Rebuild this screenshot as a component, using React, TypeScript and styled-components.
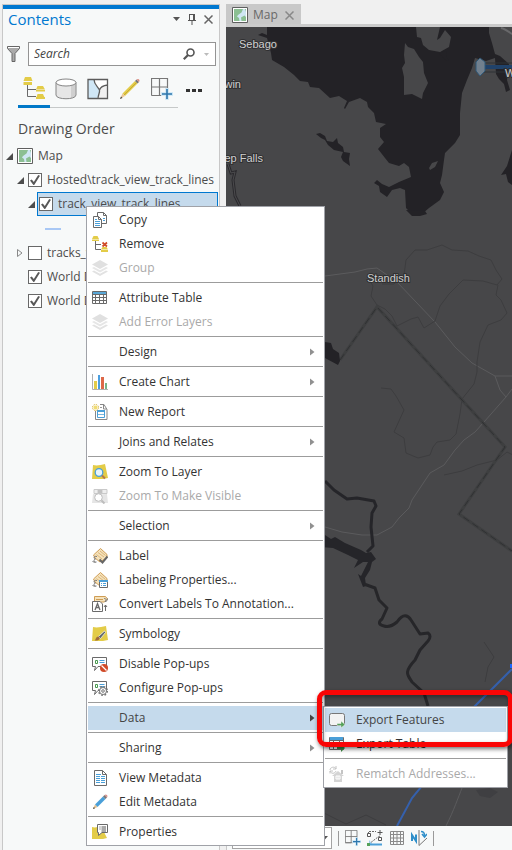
import React from "react";
import styled, { createGlobalStyle, css } from "styled-components";

const GlobalStyle = createGlobalStyle`
  * { box-sizing: border-box; }
  body { margin: 0; background: #f0f0f0; }
  button, input, select { font: inherit; color: inherit; }
  button { border: 0; padding: 0; background: none; }
`;

const Page = styled.div`
  position: relative;
  display: flex;
  gap: 6px;
  min-height: 100vh;
  padding: 4px 0 0 2px;
  overflow: hidden;
  background: #f0f0f0;
  color: #4c4c4c;
  font: 12px/24px "Open Sans", "Noto Sans", sans-serif;
`;

/* Contents pane */
const Pane = styled.aside`
  flex: 0 0 218px;
  background: #f7f9f9;
  border: 1px solid #c8c8c8;
  border-bottom: 0;
`;

const PaneAccent = styled.div`
  height: 4px;
  background: #0078d0;
`;

const PaneHeader = styled.header`
  display: flex;
  align-items: center;
  height: 20px;
  padding: 0 5px 0 5px;
  gap: 4px;
`;

const PaneTitle = styled.h1`
  flex: 1;
  margin: 0;
  color: #0078d0;
  font-size: 15px;
  font-weight: 400;
`;

const SmallButton = styled.button`
  display: grid;
  place-items: center;
  width: 12px;
  height: 16px;
`;

const SearchRow = styled.div`
  display: flex;
  align-items: center;
  gap: 8px;
  margin-top: 13px;
  padding: 0 3px 0 4px;
`;

const SearchField = styled.div`
  flex: 1;
  display: flex;
  align-items: center;
  height: 24px;
  padding: 0 3px 0 5px;
  gap: 5px;
  background: #fff;
  border: 1px solid #949494;
`;

const SearchInput = styled.input`
  flex: 1;
  width: 0;
  padding: 0;
  border: 0;
  outline: 0;
  background: none;
  font-style: italic;
  &::placeholder { color: #444; opacity: 1; }
`;

const ViewTabs = styled.div`
  display: flex;
  margin: 3px 0 0 15px;
`;

const ViewTab = styled.button<{ $active?: boolean; $plain?: boolean }>`
  display: grid;
  place-items: center;
  flex: 0 0 32px;
  height: 39px;
  padding-top: ${(p) => (p.$plain ? 6 : 2)}px;
  border-bottom: ${(p) =>
    p.$active ? "3px solid #0078c8" : p.$plain ? "3px solid transparent" : "1px solid #c6c9c9"};
`;

const SectionTitle = styled.h2`
  margin: 9px 0 3px 15px;
  font-size: 14px;
  font-weight: 500;
  line-height: 24px;
`;

const Tree = styled.ul`
  margin: 0;
  padding: 0;
  list-style: none;
`;

const TreeRow = styled.li<{ $depth: number }>`
  display: flex;
  align-items: center;
  gap: 2px;
  height: 24px;
  margin-left: ${(p) => 2 + p.$depth * 11}px;
  white-space: nowrap;
`;

const TreeBody = styled.label<{ $selected?: boolean }>`
  flex: 1;
  display: flex;
  align-items: center;
  gap: 5px;
  height: 24px;
  min-width: 0;
  margin-right: 1px;
  padding-left: 1px;
  border: 1px solid ${(p) => (p.$selected ? "#0078d0" : "transparent")};
  background: ${(p) => (p.$selected ? "#c5daec" : "none")};
`;

const Expander = styled.button`
  display: grid;
  place-items: center;
  width: 8px;
  height: 16px;
`;

const Check = styled.input`
  appearance: none;
  display: grid;
  place-items: center;
  flex: none;
  width: 14px;
  height: 14px;
  margin: 0;
  border: 1px solid #686868;
  background: #fff;
  &:checked::before {
    content: "";
    width: 10px;
    height: 10px;
    background: #585858;
    clip-path: polygon(0 55%, 18% 45%, 38% 70%, 82% 0, 100% 8%, 42% 100%, 34% 100%);
  }
`;

const SymbolRow = styled.li`
  height: 25px;
  padding: 12px 0 0 42px;
`;

const LineSymbol = styled.div`
  width: 16px;
  height: 2px;
  background: #a9c8f5;
`;

/* Map view */
const MapView = styled.main`
  flex: 1;
  display: flex;
  flex-direction: column;
  min-width: 0;
`;

const TabStrip = styled.div`
  display: flex;
  height: 23px;
  border-bottom: 3px solid #cbcbcb;
`;

const MapTab = styled.div`
  display: flex;
  align-items: center;
  gap: 6px;
  height: 20px;
  padding: 2px 5px 0 6px;
  background: #c8c8c8;
  color: #686868;
`;

const MapTabName = styled.button`
  display: flex;
  align-items: center;
  gap: 5px;
`;

const MapCanvas = styled.div`
  flex: 1;
  position: relative;
  overflow: hidden;
  background: #474749;
`;

const MapDrawing = styled.svg`
  position: absolute;
  inset: 0;
  width: 100%;
  height: 100%;
`;

const StatusBar = styled.footer`
  display: flex;
  align-items: center;
  gap: 6px;
  height: 24px;
  padding-left: 5px;
  background: #f7f9f9;
  border-left: 1px solid #c8c8c8;
`;

const ScaleBox = styled.div`
  display: grid;
  grid-template-columns: 1fr 10px;
  align-items: center;
  width: 100px;
  height: 22px;
  border: 1px solid #a4a4a4;
  background: #fff;
`;

const ScaleSelect = styled.select`
  appearance: none;
  width: 100%;
  height: 20px;
  padding: 0 4px;
  border: 0;
  background: none;
`;

const Divider = styled.span`
  width: 1px;
  height: 15px;
  background: #9a9a9a;
`;

const ToolButton = styled.button`
  display: grid;
  place-items: center;
  width: 16px;
  height: 20px;
`;

/* Menus */
const menuBox = css`
  position: absolute;
  padding: 1px;
  margin: 0;
  list-style: none;
  background: #fff;
  border: 1px solid #a0a2a8;
  color: #333;
`;

const ContextMenu = styled.ul`
  ${menuBox}
  left: 86px;
  top: 206px;
  width: 239px;
`;

const SubMenu = styled.ul`
  ${menuBox}
  left: 100%;
  top: 0;
  width: 185px;
`;

const MenuSlot = styled.li`
  position: relative;
`;

const MenuButton = styled.button<{ $active?: boolean }>`
  display: grid;
  grid-template-columns: 16px 1fr 8px;
  column-gap: 11px;
  align-items: center;
  width: 100%;
  height: 24px;
  padding: 0 5px 0 4px;
  background: ${(p) => (p.$active ? "#c5daec" : "transparent")};
  color: ${(p) => (p.$active ? "#444" : "#333")};
  text-align: left;
  white-space: nowrap;
  &:disabled { color: #a9a9a9; }
`;

const IconCell = styled.span`
  display: grid;
  width: 16px;
  height: 16px;
`;

const Separator = styled.li`
  height: 1px;
  margin: 2px 0 3px;
  background: #9c9c9c;
`;

const Highlight = styled.div`
  position: absolute;
  top: -17px;
  left: -7px;
  width: 196px;
  height: 57px;
  border: 5px solid #fa0505;
  border-radius: 9px;
  box-shadow: 1px 2px 4px rgba(0, 0, 0, 0.55), inset 1px 2px 4px rgba(0, 0, 0, 0.4);
  pointer-events: none;
`;

/* Icons */
const G = "#6a6a6a";
const Y = "#e3cc48";
const B = "#4a9fd8";

const Svg = ({ s = 16, w, h, children }: { s?: number; w?: number; h?: number; children: React.ReactNode }) => (
  <svg width={w ?? s} height={h ?? s} viewBox={`0 0 ${w ?? s} ${h ?? s}`} fill="none" aria-hidden="true">
    {children}
  </svg>
);

const LayersFaded = () => (
  <Svg>
    <path d="M0 11.500 8 16l8-4.500-2-1-6 3.300-6-3.300z" fill="#e2e2e2" />
    <path d="M0 8 8 12.500 16 8l-2-1-6 3.300L2 7z" fill="#e6e6e6" />
    <path d="M8 0 16 4.500 8 9 0 4.500z" fill="#e0e0e0" />
  </Svg>
);

const Gear = ({ x, y }: { x: number; y: number }) => (
  <g transform={`translate(${x} ${y})`} stroke="#777">
    <circle r="3.500" strokeWidth="1" fill="#fff" />
    <circle r="4.300" strokeWidth="1.500" strokeDasharray="1.700 1.680" />
    <circle r="1.300" />
  </g>
);

const PopUp = () => (
  <>
    <path d="M.5 1.500h14v9H6L2.500 14.500l1-4h-3z" stroke={G} fill="#fff" />
    <path d="M3.500 4.500h2v3h-2z" stroke="#4a9a50" />
    <path d="M7.500 4.500h5M7.500 6.500h5" stroke={B} />
  </>
);

const Tag = () => (
  <>
    <path d="M1.500 7 8.500.5 15 6.500v3L8 14 3 10z" fill="#f5e2bb" stroke="#cf9d55" />
    <path d="M6 4.500 12 9M4.500 6.500 10 11M8 3l5.500 4.500" stroke="#dcb67a" />
    <path d="M5 8.500c-3-1-4 2-1.500 2.500C1 11.500 2 14.500 4.500 14M.5 13.500l3 1" stroke="#777" />
  </>
);

const icons: Record<string, React.ReactNode> = {
  copy: (
    <Svg>
      <path d="M5.500.5h6l3 3v8h-9z" fill="#fff" stroke={G} />
      <path d="M11.500.5v3h3" stroke={G} />
      <path d="M11 6.500h2M11 8.500h2" stroke={B} />
      <path d="M1.500 4.500h5l3 3v8h-8z" fill="#fff" stroke={G} />
      <path d="M6.500 4.500v3h3" stroke={G} />
      <path d="M3 7.500h2M3 9.500h5M3 11.500h5M3 13.500h5" stroke={B} />
    </Svg>
  ),
  remove: (
    <Svg>
      <path d="M1.500 0h4L7 3H0zM0 3.500h7V5H0zM10.500 11h4l1.500 2.500H9zM9 14h7v2H9z" fill={Y} />
      <path d="M3.500 5v8.500H9M3.500 8.500H9" stroke={G} />
      <path d="m10.500 6.500 4.500 4m0-4-4.500 4" stroke="#d04a28" strokeWidth="1.700" />
    </Svg>
  ),
  layers: <LayersFaded />,
  table: (
    <Svg>
      <path d="M.5 1.500h14v12H.5z" fill="#fff" stroke={G} />
      <path d="M1 2h13v2H1z" fill="#59a8d8" />
      <path d="M.5 4.500h14M.5 7.500h14M.5 10.500h14M3.500 4.500v9M7.500 4.500v9M11.500 4.500v9" stroke={G} />
    </Svg>
  ),
  chart: (
    <Svg>
      <path d="M.5 0v15.500H16" stroke="#b0b0b0" />
      <path d="M2 7h3v8H2z" fill={Y} />
      <path d="M6 1h2v14H6z" fill="#4a9fe0" />
      <path d="M9 3h3v12H9z" fill="#dd6848" />
      <path d="M13 9h2v6h-2z" fill="#78b488" />
    </Svg>
  ),
  report: (
    <Svg>
      <path d="M3.500 7v8.500h11.500v-10L12 .500H8" fill="#fff" stroke="#888" />
      <path d="M11.500 1v4H15" stroke="#888" />
      <path d="M8 3.500h2" stroke="#999" />
      <path d="M5.500 6.500h7v7h-7z" stroke={B} />
      <path d="M5 6h8v2H5z" fill={B} />
      <path d="M6 10.500h6" stroke="#79b7dd" />
      <circle cx="3.500" cy="3.500" r="2" fill="#f1dd74" />
      <circle cx="3.500" cy="3.500" r="3" stroke="#d6ad2e" strokeDasharray="1.300 1.050" />
    </Svg>
  ),
  zoom: (
    <Svg>
      <path d="M1 1c4 1 8 0 12-1l3 14-5 1H0z" fill={Y} />
      <circle cx="7" cy="8.500" r="3.800" fill="#e8f5fc" stroke={B} strokeWidth="1.300" />
      <path d="m10 11.500 3 3" stroke="#b4794c" strokeWidth="2" />
    </Svg>
  ),
  zoomOff: (
    <Svg>
      <path d="M2 1.500h13v4H2zM6 1v4m4-4v4" stroke="#c9c9c9" fill="#eee" />
      <path d="M6 2h4v3H6z" fill="#c2c2c2" />
      <path d="M1 6c5 1 9 0 14 0l1 9H0z" fill="#e5e5e5" />
      <circle cx="6.500" cy="9.500" r="3.800" fill="#fff" stroke="#bdbdbd" />
      <path d="m9.500 12.500 3 3" stroke="#bdbdbd" strokeWidth="2" />
    </Svg>
  ),
  label: (
    <Svg>
      <Tag />
      <path d="m7.500 11.500 3 3L15.500 8.500" stroke="#666" strokeWidth="2" />
    </Svg>
  ),
  labelProps: (
    <Svg>
      <Tag />
      <path d="M7.500 8.500h8v7h-8z" fill="#fff" stroke={G} />
      <path d="M7 8h9v2H7z" fill={B} />
      <path d="M9 11.500h1m1 0h3m-5 2h1m1 0h3" stroke={B} />
    </Svg>
  ),
  annotation: (
    <Svg>
      <path d="M2.500 5V.500h11L15.500 3l-3 3H8" fill="#f5e2bb" stroke="#cf9d55" />
      <path d="M4 3.500h7" stroke="#cf9d55" />
      <path d="M12 2.500c2 0 3 1 1 3 2 0 3-2 2.500-3" stroke="#777" />
      <path d="M.5 5.500h7.500l2.500 2.500v7.500H.5z" fill="#fff" stroke={G} />
      <path d="m3 14 2.500-6.500L8 14M4 11.500h3" stroke={G} strokeWidth="1.300" />
      <path d="M13.500 15V9M12 11l1.500-2L15 11" stroke={G} />
    </Svg>
  ),
  symbology: (
    <Svg>
      <path d="M1 1c4 1 8 0 13-1l2 14-5 1H0z" fill={Y} />
      <path d="M6.500 10.500 12.500 5l1 1.500L8.500 12.500z" fill="#5c6468" stroke="#eee" strokeWidth=".8" />
      <path d="M2.500 14.500c1.500-.5 1-4 4-4 2 1 2 4.500-4 4z" fill="#a06a3c" />
    </Svg>
  ),
  popupOff: (
    <Svg>
      <PopUp />
      <circle cx="12" cy="12" r="4" fill="#d04a28" />
      <path d="m9.500 9.500 5 5" stroke="#fff" strokeWidth="1.300" />
    </Svg>
  ),
  popupGear: (
    <Svg>
      <PopUp />
      <Gear x={11} y={11} />
    </Svg>
  ),
  metadata: (
    <Svg>
      <path d="M2.500.5h8l4 4v11h-12z" fill="#fff" stroke={G} />
      <path d="M10.500.5v4h4" stroke={G} />
      <path d="M4 4.500h5M4 6.500h4m1 0h4M4 8.500h4m1 0h4M4 10.500h4m1 0h4M4 12.500h4m1 0h4" stroke={B} />
    </Svg>
  ),
  edit: (
    <Svg>
      <path d="m3 10.500 8-8 2.500 2.500-8 8z" fill="#4a9fd8" />
      <path d="M3 10.500 1 15l4.500-2z" fill="#e0c090" />
      <path d="m1 15 .8-2 1.200 1.200z" fill="#333" />
      <path d="m11 2.500 1.500-1.500L15 3.500 13.500 5z" fill="#777" />
      <path d="M12.500 1c1.500-1.500 4 .5 2.500 2.500z" fill="#d9918a" />
    </Svg>
  ),
  properties: (
    <Svg>
      <path d="M0 3c3 1 6 0 9-1l6 12-4 1H0z" fill={Y} />
      <path d="M5.500.5h10v8H10l-3.500 3v-3h-1z" fill="#fff" stroke={G} />
      <path d="M7.500 3h1m1 0H14M7.500 5h1m1 0H14M9.500 7H14" stroke="#555" />
    </Svg>
  ),
  exportFeatures: (
    <Svg>
      <rect x=".5" y="1.500" width="15" height="12" rx="2" fill="#f3f3f3" stroke="#777" />
      <path d="M8 11.500h4V9l4 3.500-4 3.500v-2.500H8z" fill="#55a25a" stroke="#f3f3f3" strokeWidth=".5" />
    </Svg>
  ),
  exportTable: (
    <Svg>
      <path d="M.5 1.500h14v12H.5z" fill="#fff" stroke={G} />
      <path d="M1 1h13v3H1z" fill="#4a9fd8" />
      <path d="M.5 4.500h14M.5 7.500h14M.5 10.500h14M4.500 4.500v9M10.500 4.500v9" stroke={G} />
      <path d="M8 11h4V8l4 4-4 4v-3H8z" fill="#3d8d44" />
    </Svg>
  ),
  rematch: (
    <Svg>
      <path d="M1 4c0-3 5-4 6-1M7 0v3H4M7 5c-1 3-5 3-6 0M1 7.500V5h3" stroke="#c4c4c4" />
      <path d="m3 10 6-5 6 5h-2v6H5v-6z" fill="#d4d4d4" />
      <path d="M12 4h2v4h-2z" fill="#c4c4c4" />
      <path d="M7 10h4v3H7zM9 10v3" stroke="#fff" />
    </Svg>
  ),
};

const MapIcon = () => (
  <Svg>
    <path d="M.5.5h15v15H.5z" fill="#fff" stroke="#5f5f5f" />
    <path d="M2 2h12v12H2z" fill="#cfe6f3" />
    <path d="M2 2h9L9.500 5.500 6 8l-1 1.500L7 11l.5 3H2zM9 10.500l3.500-2L14 10v4H9.500zM13 2h1v3z" fill="#8bbf92" />
  </Svg>
);

const Caret = ({ color = "#555" }: { color?: string }) => (
  <Svg w={7} h={4}>
    <path d="M0 0h7L3.500 4z" fill={color} />
  </Svg>
);

const Arrow = ({ dark }: { dark?: boolean }) => (
  <Svg w={5} h={8}>
    <path d="M0 .5 4.500 4 0 7.500z" fill={dark ? "#444" : "#909090"} />
  </Svg>
);

const Opened = () => (
  <Svg s={7}>
    <path d="M7 0v7H0z" fill="#4c4c4c" />
  </Svg>
);

const Closed = () => (
  <Svg w={6} h={10}>
    <path d="M.5 1.500v7L5 5z" stroke="#888" />
  </Svg>
);

const GridPlus = ({ s }: { s: number }) => (
  <svg width={s} height={s} viewBox="0 0 22 22" fill="none" aria-hidden="true">
    <path d="M.5 17.500V.5h16v11M.5 9h16M8.500.5V17.500H.5h10" stroke="#777" strokeWidth="1.200" />
    <path d="M16 10v12m-6-6h12" stroke="#c9e5f5" strokeWidth="3.500" />
    <path d="M16 11v10m-5-5h10" stroke="#2d76ac" strokeWidth="1.600" />
  </svg>
);

const TabIcons = {
  order: (
    <Svg s={22}>
      <path d="M2 0h6l1.500 4H.5zM.5 5H9v3H.5zM14.500 9h5.500l2 3.500h-9zM13 13h9v1.500h-9zM14.500 17h5.500l1.500 3.500h-8zM13 20h9v2h-9z" fill={Y} />
      <path d="M4.500 8v11.500H13M4.500 12.500H13" stroke={G} />
    </Svg>
  ),
  source: (
    <Svg s={22}>
      <path d="M1 4.500v12.500c0 5 20 5 20 0V4.500z" fill="#e6e6e6" />
      <path d="M16 8v12l4.500-2V6z" fill="#cfcfcf" />
      <path d="M1 4.500v12.500c0 5 20 5 20 0V4.500z" stroke="#858585" />
      <ellipse cx="11" cy="4.500" rx="10" ry="3.500" fill="#fff" stroke="#858585" />
    </Svg>
  ),
  selection: (
    <Svg s={22}>
      <path d="M1 1.500h19.500v19H1z" fill="#fff" />
      <path d="M1 1.500h6c0 5 3 7 5 10.500 1 4-1 5-1.500 8.500H1z" fill="#d0e7f6" />
      <path d="M12.500 12c2-4 4-4 8-5v13.500h-10z" fill="#f0f0f0" />
      <path d="M1 1.500h19.500v19H1zM7 1.500c0 5 4 7 5.500 10.500.5 3-1.500 5-1.500 8.500M12.500 12c1-3 4-4.500 8-5" stroke="#5c5c5c" strokeWidth="1.300" />
    </Svg>
  ),
  edit: (
    <Svg s={22}>
      <path d="M3.500 15.500 16 3l2.500 2.500L6 18z" fill={Y} />
      <path d="M3.500 15.500 1 21l5-3z" fill="#eac797" />
      <path d="m1 21 1-2.500L3.500 20z" fill="#444" />
      <path d="m5 17 12.500-12.500" stroke="#c5a93a" />
      <path d="m16 3 1.500-1.500L20 4l-1.500 1.500z" fill="#777" />
      <path d="M17.500 1.500c2-1.500 4 .5 2.500 2.500z" fill="#dd8c80" />
    </Svg>
  ),
  more: (
    <Svg w={16} h={3}>
      <path d="M0 0h4v3H0zM6 0h4v3H6zM12 0h4v3h-4z" fill="#333" />
    </Svg>
  ),
};

const Terrain = () => (
  <MapDrawing viewBox="226 27 286 799" preserveAspectRatio="xMidYMid slice" fill="none" role="img" aria-label="Dark basemap of the Sebago Lake region">
    <path
      fill="#232226"
      d="M267 27V35L262 33 258 35 267 38 271 53 272 60 284 67 294 75 300 81 308 82 310 87 319 88 330 98 339 96 347 101 344 108 345 109 349 102 360 98 367 102 368 107 374 113 376 122 386 124 380 128V137L384 142 378 149 385 158 389 163 399 166 404 163 409 167 411 177 399 182 389 187 382 184 377 180 374 183 379 186 380 192 387 197 392 190 400 188 405 190 406 208 412 214H422L429 208 440 200 444 192 440 183 442 175 444 160 445 153 455 143 460 135V113L462 93 467 80 472 68 475 58 486 61 495 58 496 74 499 79 504 84 506 92 510 90 507 80 509 64 500 56 495 54 492 43 489 33V27z"
    />
    <path
      fill="#474749"
      d="m405 43 3 4 6 2 5 8 4 5 1 11 4 10-5 10-1 6-10-5-8 1v-18l-2-9 3-5-1-8zM416 27l1 10 4 1 2 7 6 5 11 2 9-5 2-10-6-7-5 8-3 2 3-13zM429 168l3-5 6-2-3 6-5 3z"
    />
    <path d="m439 54 5-3 3 1-1 5 3 3-3 1-4-5zM316 134l4-1 5 3 2 5 6 1 4-4 1 5 5 4 1 5 6 1-1 6 1 7-7-5-2-4 2-5-9-2-6-5-3-5-4-2zM512 150l-5 16-6 9 5-1 2 8 4 3z" fill="#232226" />
    <path d="M501 28c5 1 9 5 11 6" stroke="#68686a" strokeWidth="2" />
    <path d="m228 164 3 9 4-1-2 8 2 16 5 10" stroke="#2b2a2e" strokeWidth="3" />
    <path d="m228 164 3 9 4-1-2 8 2 16 5 10" stroke="#4b4b4d" />
    <path
      stroke="#5b5b5d"
      strokeWidth="1"
      d="m325 276 30-4 12-3 10-1 20 14 38 40 20 25 17 16 23 13h17M495 376l5 14 6 7 6-8M506 397l-22 25-9 10-11 8-9 10-11 15-14 8-18 27-3 8-10 10-7 9-15 8h-15l-20-3-17-5M462 788c-4 10-8 22-16 38"
    />
    <path
      stroke="#3d3d3f"
      strokeWidth="1"
      d="m367 276 6 10-2 10 6 9 8 4 7 7 5 10 14-7 7-2 6 11 11-7 5-15 9-12 14-14 20 1 14 4 5-6-6-9-5-10-12-4-11-5-16-1-10-5-15 5-12 0-9 10-2 15-10 9-12 0M498 285l-2 10 5 5 6 13-6 7-13 5-8 17-3 20v10l-3 12-12 15-2 15-4 20-6 6-13 2-4 5-3 8-12 3-12-5-2-15-10-6 10-22-8-14-5-7-10-1M322 812l24 12 20-9 20 10M444 475l18-4 15-6 20-5 10-8 6 3M484 642l10 15-6 10-3 15"
    />
    <path d="m340 360 37-53 128 140-46 67 53 37" stroke="#3e3f40" strokeWidth="3" />
    <path d="m340 360 37-53 128 140-46 67 53 37" stroke="#303133" strokeWidth="1" strokeDasharray="7 4" />
    <path d="M325 342l6 1 2 6 6 4 1 8-2 4-13-7zM406 210l19 1 2 3-7 2h-8z" fill="#232226" />
    <path d="m325 481 9 9 13 9 10-1 17 3 2 5-4 7-1 14 2 19-6 6" stroke="#252529" strokeWidth="3" strokeLinejoin="round" />
    <path d="m325 535 6 4 4-2 10 6 16 7 5 3 5-1 5 7-4 3-2 8-5 8 1 8-3 1-5-13 3 2 7-14-5 0-9 6 4-8-10-5-15-7-12-1z" fill="#252529" />
    <path d="m364 584 11 4 4 12 8 8-5 11q-6 5 2 7 6 2 13-4c6-9 11-7 14-2l9 14 8-1q4 3 0 8l-8 9-5 10c-12 13-7 15-3 22l12 11 4 13" stroke="#262629" strokeWidth="3" strokeLinejoin="round" />
    <path d="m512 669-40 40-50 77-10 12-15 28" stroke="#3560ac" strokeWidth="2" />
    <path d="M510 664h4v4h-4z" fill="#1c66ff" />
    <path d="m476 790 14-2 8 4-8 6-10-2z" fill="#3f3f42" />
    <path d="M484 67h28" stroke="#20426a" strokeWidth="4" />
    <path d="M484 63h28M484 72h28" stroke="#2f3337" />
    <path d="m480 58 5 4v9l-5 5-4-5v-9z" fill="#71808e" stroke="#2f5878" />
    <g fill="#cfcfcf" stroke="#303032" strokeWidth="2" paintOrder="stroke" fontFamily="Liberation Sans, sans-serif" fontSize="11">
      <text x="239" y="48">Sebago</text>
      <text x="241" y="88" textAnchor="end">win</text>
      <text x="263" y="162" textAnchor="end">ep Falls</text>
      <text x="367" y="282">Standish</text>
      <text x="505" y="77">W</text>
    </g>
  </MapDrawing>
);

type Item = { text: string; icon?: string; disabled?: boolean; sub?: boolean };

const menuGroups: Item[][] = [
  [{ text: "Copy", icon: "copy" }, { text: "Remove", icon: "remove" }, { text: "Group", icon: "layers", disabled: true }],
  [{ text: "Attribute Table", icon: "table" }, { text: "Add Error Layers", icon: "layers", disabled: true }],
  [{ text: "Design", sub: true }],
  [{ text: "Create Chart", icon: "chart", sub: true }],
  [{ text: "New Report", icon: "report" }],
  [{ text: "Joins and Relates", sub: true }],
  [{ text: "Zoom To Layer", icon: "zoom" }, { text: "Zoom To Make Visible", icon: "zoomOff", disabled: true }],
  [{ text: "Selection", sub: true }],
  [
    { text: "Label", icon: "label" },
    { text: "Labeling Properties...", icon: "labelProps" },
    { text: "Convert Labels To Annotation...", icon: "annotation" },
  ],
  [{ text: "Symbology", icon: "symbology" }],
  [{ text: "Disable Pop-ups", icon: "popupOff" }, { text: "Configure Pop-ups", icon: "popupGear" }],
  [{ text: "Data", sub: true }],
  [{ text: "Sharing", sub: true }],
  [{ text: "View Metadata", icon: "metadata" }, { text: "Edit Metadata", icon: "edit" }],
  [{ text: "Properties", icon: "properties" }],
];

const dataGroups: Item[][] = [
  [{ text: "Export Features", icon: "exportFeatures" }, { text: "Export Table", icon: "exportTable" }],
  [{ text: "Rematch Addresses...", icon: "rematch", disabled: true }],
];

const MenuItems = ({ groups, active, submenu }: { groups: Item[][]; active: string; submenu?: React.ReactNode }) => (
  <>
    {groups.map((group, i) => (
      <React.Fragment key={i}>
        {i > 0 && <Separator role="separator" />}
        {group.map((item) => (
          <MenuSlot key={item.text} role="none">
            <MenuButton
              type="button"
              role="menuitem"
              $active={item.text === active}
              disabled={item.disabled}
              aria-haspopup={item.sub ? "menu" : undefined}
            >
              <IconCell>{item.icon && icons[item.icon]}</IconCell>
              {item.text}
              {item.sub && <Arrow dark={item.text === active} />}
            </MenuButton>
            {item.text === active && submenu}
          </MenuSlot>
        ))}
      </React.Fragment>
    ))}
  </>
);

const CloseMark = ({ color = "#666" }: { color?: string }) => (
  <Svg s={9}>
    <path d="m.5.5 8 8m0-8-8 8" stroke={color} strokeWidth="1.500" />
  </Svg>
);

type Layer = { name: string; depth: number; open: boolean | null; checked: boolean; selected?: boolean };

const LayerRow = ({ name, depth, open, checked, selected }: Layer) => (
  <TreeRow $depth={depth}>
    <Expander type="button" aria-label={`Toggle ${name}`}>
      {open === null ? null : open ? <Opened /> : <Closed />}
    </Expander>
    <TreeBody $selected={selected}>
      <Check type="checkbox" defaultChecked={checked} />
      {name}
    </TreeBody>
  </TreeRow>
);

const SmallTool = ({ label, children }: { label: string; children: React.ReactNode }) => (
  <ToolButton type="button" aria-label={label}>{children}</ToolButton>
);

export default function App() {
  return (
    <>
      <GlobalStyle />
      <Page>
        <Pane>
          <PaneAccent />
          <PaneHeader>
            <PaneTitle>Contents</PaneTitle>
            <SmallButton type="button" aria-label="Pane options"><Caret /></SmallButton>
            <SmallButton type="button" aria-label="Pin pane">
              <Svg w={8} h={12}>
                <path d="M1.500 1v6M0 7.500h8M1.500 1.500h5M5.500 1v6M6.500 1v6M4 7.500V12" stroke="#555" />
              </Svg>
            </SmallButton>
            <SmallButton type="button" aria-label="Close pane"><CloseMark /></SmallButton>
          </PaneHeader>
          <SearchRow>
            <Svg w={13} h={16}>
              <path d="M.5.5h12v2l-4.500 5v8H5v-8l-4.500-5z" fill="#aaa" stroke="#666" />
              <path d="M1 1.500h11" stroke="#fff" />
            </Svg>
            <SearchField>
              <SearchInput type="search" placeholder="Search" aria-label="Search" />
              <SmallButton type="button" aria-label="Run search">
                <Svg s={12}>
                  <circle cx="7.500" cy="4.500" r="3.500" stroke="#555" strokeWidth="1.600" />
                  <path d="M5 7 .8 11.200" stroke="#555" strokeWidth="2.200" />
                </Svg>
              </SmallButton>
              <SmallButton type="button" aria-label="Search options">
                <Svg w={5} h={3}><path d="M0 0h5L2.500 3z" fill="#bbb" /></Svg>
              </SmallButton>
            </SearchField>
          </SearchRow>
          <ViewTabs>
            <ViewTab $active type="button" aria-label="List by drawing order">{TabIcons.order}</ViewTab>
            <ViewTab type="button" aria-label="List by data source">{TabIcons.source}</ViewTab>
            <ViewTab type="button" aria-label="List by selection">{TabIcons.selection}</ViewTab>
            <ViewTab type="button" aria-label="List by editing">{TabIcons.edit}</ViewTab>
            <ViewTab type="button" aria-label="List by snapping"><GridPlus s={22} /></ViewTab>
            <ViewTab $plain type="button" aria-label="More views">{TabIcons.more}</ViewTab>
          </ViewTabs>
          <SectionTitle>Drawing Order</SectionTitle>
          <Tree>
            <TreeRow $depth={0}>
              <Expander type="button" aria-label="Toggle Map"><Opened /></Expander>
              <TreeBody as="div"><MapIcon />Map</TreeBody>
            </TreeRow>
            <LayerRow name="Hosted\track_view_track_lines" depth={1} open checked />
            <LayerRow name="track_view_track_lines" depth={2} open checked selected />
            <SymbolRow><LineSymbol /></SymbolRow>
            <LayerRow name="tracks_v" depth={1} open={false} checked={false} />
            <LayerRow name="World D" depth={1} open={null} checked />
            <LayerRow name="World D" depth={1} open={null} checked />
          </Tree>
        </Pane>
        <MapView>
          <TabStrip>
            <MapTab>
              <MapTabName type="button"><MapIcon />Map</MapTabName>
              <SmallButton type="button" aria-label="Close map"><CloseMark color="#888" /></SmallButton>
            </MapTab>
          </TabStrip>
          <MapCanvas><Terrain /></MapCanvas>
          <StatusBar>
            <ScaleBox>
              <ScaleSelect aria-label="Map scale" />
              <Caret />
            </ScaleBox>
            <Divider />
            <SmallTool label="Snapping"><GridPlus s={16} /></SmallTool>
            <SmallTool label="Constraints">
              <Svg>
                <path d="M1.500 4v-2.500H9M13 6l-2 1-9 7" stroke={G} strokeDasharray="2 1" />
                <path d="M2 15V10l4 5z" fill="#9fd0f0" />
                <path d="M3 14.500h12" stroke={B} strokeWidth="2" />
                <path d="M.5 3.500h3v3h-3zM11.500 7.500h3v3h-3z" fill="#fff" stroke="#555" />
                <path d="M13 0v5m-2.500-2.500h5" stroke="#555" />
                <path d="M0 13h3v3H0z" fill="#55a25a" />
              </Svg>
            </SmallTool>
            <SmallTool label="Grid">
              <Svg>
                <path d="M1.500 1.500h13v13h-13zM4.500 1v13M8 1v13M11.500 1v13M1 4.500h13M1 8h13M1 11.500h13" stroke="#8a8a8a" />
              </Svg>
            </SmallTool>
            <SmallTool label="Correction">
              <Svg>
                <path d="M1 11V5l4 6V4.500" stroke="#2f8fca" strokeWidth="2" />
                <path d="M8 0v15.500L16 8" stroke="#777" />
                <path d="M10 1.500c3 0 3.500 2 3.500 4M11 4l2.500 3L16 4" stroke="#2f8fca" strokeWidth="1.500" />
              </Svg>
            </SmallTool>
            <Divider />
          </StatusBar>
        </MapView>
        <ContextMenu role="menu" aria-label="Layer">
          <MenuItems
            groups={menuGroups}
            active="Data"
            submenu={
              <SubMenu role="menu" aria-label="Data">
                <MenuItems groups={dataGroups} active="Export Features" />
                <Highlight role="presentation" />
              </SubMenu>
            }
          />
        </ContextMenu>
      </Page>
    </>
  );
}
